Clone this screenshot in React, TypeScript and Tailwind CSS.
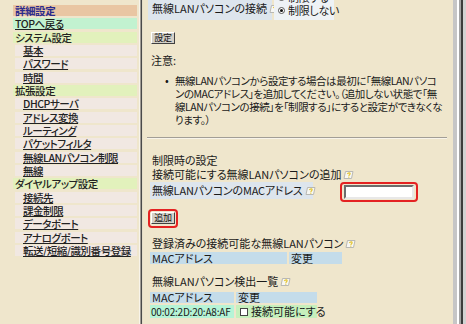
import type { ReactNode } from "react";

type MenuKind = "title" | "top" | "section" | "item";

const menu: { label: string; kind: MenuKind }[] = [
  { label: "詳細設定", kind: "title" },
  { label: "TOPへ戻る", kind: "top" },
  { label: "システム設定", kind: "section" },
  { label: "基本", kind: "item" },
  { label: "パスワード", kind: "item" },
  { label: "時間", kind: "item" },
  { label: "拡張設定", kind: "section" },
  { label: "DHCPサーバ", kind: "item" },
  { label: "アドレス変換", kind: "item" },
  { label: "ルーティング", kind: "item" },
  { label: "パケットフィルタ", kind: "item" },
  { label: "無線LANパソコン制限", kind: "item" },
  { label: "無線", kind: "item" },
  { label: "ダイヤルアップ設定", kind: "section" },
  { label: "接続先", kind: "item" },
  { label: "課金制限", kind: "item" },
  { label: "データポート", kind: "item" },
  { label: "アナログポート", kind: "item" },
  { label: "転送/短縮/識別番号登録", kind: "item" },
];

const kindClass: Record<MenuKind, string> = {
  title: "ml-[13px] pl-[2px] bg-[#e9c6a3] text-[#2b2b8c] font-bold",
  top: "ml-[13px] pl-[2px] bg-[#c2f2d0] underline underline-offset-[1px] font-medium",
  section: "ml-[13px] pl-[2px] bg-[#e2f1bc] font-medium",
  item: "ml-[15px] pl-[8px] bg-[#f1e8e2] underline underline-offset-[1px] font-medium",
};

function HelpIcon() {
  return (
    <svg width="11" height="10" viewBox="0 0 11 10" className="inline-block ml-[2px] align-[-1px] shrink-0">
      <path d="M2.5 1.5 H10 L8.5 8.5 H1 Z" fill="#f7f7f3" stroke="#b8b8b4" strokeWidth="1" />
      <path d="M4.4 4 Q4.9 2.7 6.3 2.8 Q7.6 3.1 6.8 4.4 Q6 5 5.8 5.9" fill="none" stroke="#e4c42c" strokeWidth="1.2" />
      <rect x="5.2" y="6.6" width="1.2" height="1.1" fill="#e4c42c" />
    </svg>
  );
}

function Btn({ children }: { children: ReactNode }) {
  return (
    <div className="w-[24px] h-[12px] bg-[#d4d0c8] border border-t-white border-l-white border-b-[#404040] border-r-[#404040] text-[9px] leading-[10px] tracking-[-0.3px] flex items-center justify-center text-[#111]">
      {children}
    </div>
  );
}

function Sidebar() {
  return (
    <div className="w-[139px] shrink-0 pt-[5px] flex flex-col gap-y-[2.33px] text-[10.5px] tracking-[-0.45px] text-[#222]">
      {menu.map((m) => (
        <div key={m.label} className={`h-[11px] leading-[11px] mr-[2px] whitespace-nowrap ${kindClass[m.kind]}`}>
          {m.label}
        </div>
      ))}
    </div>
  );
}

export default function App() {
  return (
    <div className="w-[466px] h-[324px] flex overflow-hidden bg-[#efe6cc] text-[#1a1a1a] text-[11px] leading-[13px] font-['Noto_Sans_CJK_JP','Liberation_Sans',sans-serif] [font-feature-settings:'palt']">
      <Sidebar />

      {/* frame border */}
      <div className="flex shrink-0">
        <div className="w-[1px] bg-[#f8f4ea]" />
        <div className="w-[1px] bg-[#a09c94]" />
        <div className="w-[1px] bg-[#4a4a4a]" />
        <div className="w-[1px] bg-[#e4ddc8]" />
      </div>

      <div className="flex-1 overflow-hidden pl-[5px]">
        {/* top setting row (scrolled) */}
        <div className="flex gap-[2px] mt-[-14px] h-[34px]">
          <div className="w-[124px] shrink-0 bg-[#dde5ed] pt-[11px] flex items-center pl-[4px] whitespace-nowrap">
            無線LANパソコンの接続
            <HelpIcon />
          </div>
          <div className="w-[60px] shrink-0 bg-[#eef2f5] pt-[5px] pl-[4px] whitespace-nowrap tracking-[-0.3px]">
            <div className="flex items-center h-[13px] gap-[3px]">
              <span className="w-[7px] h-[7px] shrink-0 rounded-full border border-[#555] bg-white" />
              制限する
            </div>
            <div className="flex items-center h-[13px] gap-[3px]">
              <span className="w-[7px] h-[7px] shrink-0 rounded-full border border-[#555] bg-white flex items-center justify-center">
                <span className="w-[3px] h-[3px] rounded-full bg-[#111]" />
              </span>
              制限しない
            </div>
          </div>
        </div>

        <div className="mt-[12px] ml-[3px]">
          <Btn>設定</Btn>
        </div>

        <div className="mt-[10px] ml-[3px]">注意:</div>

        <div className="mt-[7px] flex">
          <div className="w-[27px] shrink-0 pl-[17px]">•</div>
          <div className="whitespace-nowrap text-[10.5px] tracking-[-0.45px]">
            <div>無線LANパソコンから設定する場合は最初に「無線LANパソコ</div>
            <div>ンのMACアドレス」を追加してください。（追加しない状態で「無</div>
            <div>線LANパソコンの接続」を「制限する」にすると設定ができなくな</div>
            <div>ります。）</div>
          </div>
        </div>

        <div className="mt-[11px] ml-[-1px] w-[300px] border-t border-t-[#a29e96] border-b border-b-[#f8f4ea]" />

        <div className="mt-[15px] ml-[4px]">制限時の設定</div>
        <div className="mt-[1px] ml-[4px] whitespace-nowrap">
          接続可能にする無線LANパソコンの追加
          <HelpIcon />
        </div>

        <div className="mt-[1px] flex items-start">
          <div className="ml-[2px] w-[163px] shrink-0 h-[17px] bg-[#dde5ed] pl-[2px] flex items-center whitespace-nowrap tracking-[-0.2px]">
            無線LANパソコンのMACアドレス
            <HelpIcon />
          </div>
          <div className="ml-[27px] rounded-[4px] border-2 border-[#e42222] px-[2px] py-[1px]">
            <div className="w-[70px] h-[14px] bg-white border-2 border-t-[#6c6c6c] border-l-[#6c6c6c] border-b-[#e8e8e8] border-r-[#e8e8e8]" />
          </div>
        </div>

        <div className="mt-[7px] w-[30px] h-[19px] rounded-[4px] border-2 border-[#e42222] pl-[1px] pt-[1px]">
          <Btn>追加</Btn>
        </div>

        <div className="mt-[9px] ml-[4px] whitespace-nowrap">
          登録済みの接続可能な無線LANパソコン
          <HelpIcon />
        </div>
        <div className="mt-[2px] ml-[2px] flex gap-[2px] h-[12px] leading-[12px]">
          <div className="w-[137px] bg-[#c4dcea] pl-[2px]">MACアドレス</div>
          <div className="w-[53px] bg-[#c4dcea] pl-[2px]">変更</div>
        </div>

        <div className="mt-[11px] ml-[4px] whitespace-nowrap">
          無線LANパソコン検出一覧
          <HelpIcon />
        </div>
        <div className="mt-[4px] ml-[2px] flex flex-col gap-[2px]">
          <div className="flex gap-[2px] h-[11px] leading-[11px]">
            <div className="w-[84px] bg-[#c4dcea] pl-[2px]">MACアドレス</div>
            <div className="w-[81px] bg-[#c4dcea] pl-[2px]">変更</div>
          </div>
          <div className="flex gap-[2px] h-[13px] leading-[13px]">
            <div className="w-[84px] bg-[#b6f4d6] pl-[1px] text-[10px] tracking-[-0.2px] whitespace-nowrap">00:02:2D:20:A8:AF</div>
            <div className="w-[81px] bg-[#c6f0bc] pl-[4px] flex items-center gap-[3px] whitespace-nowrap">
              <span className="w-[8px] h-[8px] bg-white border border-[#444] shrink-0" />
              接続可能にする
            </div>
          </div>
        </div>
      </div>

      {/* right frame border */}
      <div className="flex shrink-0">
        <div className="w-[4px] bg-[#c6c6c6]" />
        <div className="w-[2px] bg-white" />
        <div className="w-[2px] bg-[#a4a4a4]" />
        <div className="w-[2px] bg-[#3c3c3c]" />
        <div className="w-[3px] bg-[#d2d2d2]" />
      </div>
    </div>
  );
}
